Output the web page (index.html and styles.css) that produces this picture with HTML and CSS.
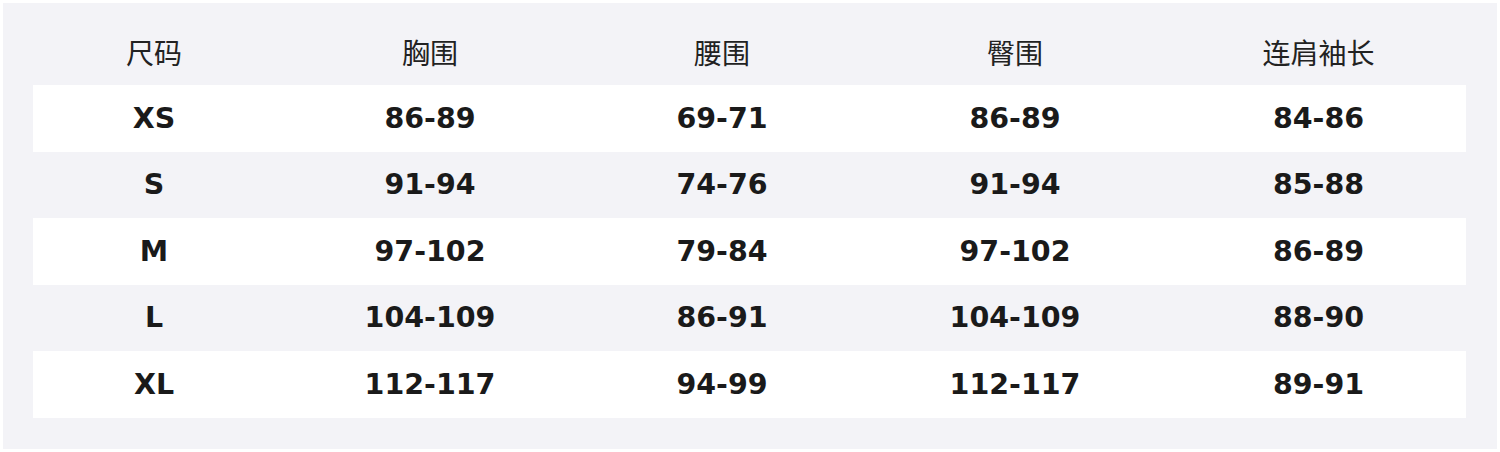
FILE: index.html
```html
<!DOCTYPE html>
<html lang="zh">
<head>
<meta charset="utf-8">
<link rel="stylesheet" href="styles.css">
</head>
<body>
<div class="panel">
  <table class="sizes">
    <colgroup>
      <col class="c1"><col class="c2"><col class="c3"><col class="c4"><col class="c5">
    </colgroup>
    <thead>
      <tr><th>尺码</th><th>胸围</th><th>腰围</th><th>臀围</th><th>连肩袖长</th></tr>
    </thead>
    <tbody>
      <tr class="odd"><td>XS</td><td>86-89</td><td>69-71</td><td>86-89</td><td>84-86</td></tr>
      <tr><td>S</td><td>91-94</td><td>74-76</td><td>91-94</td><td>85-88</td></tr>
      <tr class="odd"><td>M</td><td>97-102</td><td>79-84</td><td>97-102</td><td>86-89</td></tr>
      <tr><td>L</td><td>104-109</td><td>86-91</td><td>104-109</td><td>88-90</td></tr>
      <tr class="odd"><td>XL</td><td>112-117</td><td>94-99</td><td>112-117</td><td>89-91</td></tr>
    </tbody>
  </table>
</div>
</body>
</html>
```
FILE: styles.css
```css
html, body {
  margin: 0;
  padding: 0;
  background: #ffffff;
}
body {
  padding: 3px 3px 3px 3px;
}
.panel {
  background: #f3f3f7;
  height: 446px;
  box-sizing: border-box;
  padding: 16px 30px 30px 30px;
}
.sizes {
  width: 1433px;
  border-collapse: collapse;
  table-layout: fixed;
}
.c1 { width: 242px; }
.c2 { width: 310px; }
.c3 { width: 274px; }
.c4 { width: 312px; }
.c5 { width: 295px; }
.sizes th {
  height: 66px;
  padding: 0;
  text-align: center;
  vertical-align: middle;
  font-family: "Noto Sans CJK SC", "Noto Sans", sans-serif;
  font-weight: 400;
  font-size: 28px;
  color: #222222;
}
.sizes td {
  height: 66.5px;
  padding: 0;
  text-align: center;
  vertical-align: middle;
  font-family: "DejaVu Sans", sans-serif;
  font-weight: 700;
  font-size: 28.5px;
  color: #1a1a1a;
}
.sizes tr.odd td {
  background: #ffffff;
}
```
